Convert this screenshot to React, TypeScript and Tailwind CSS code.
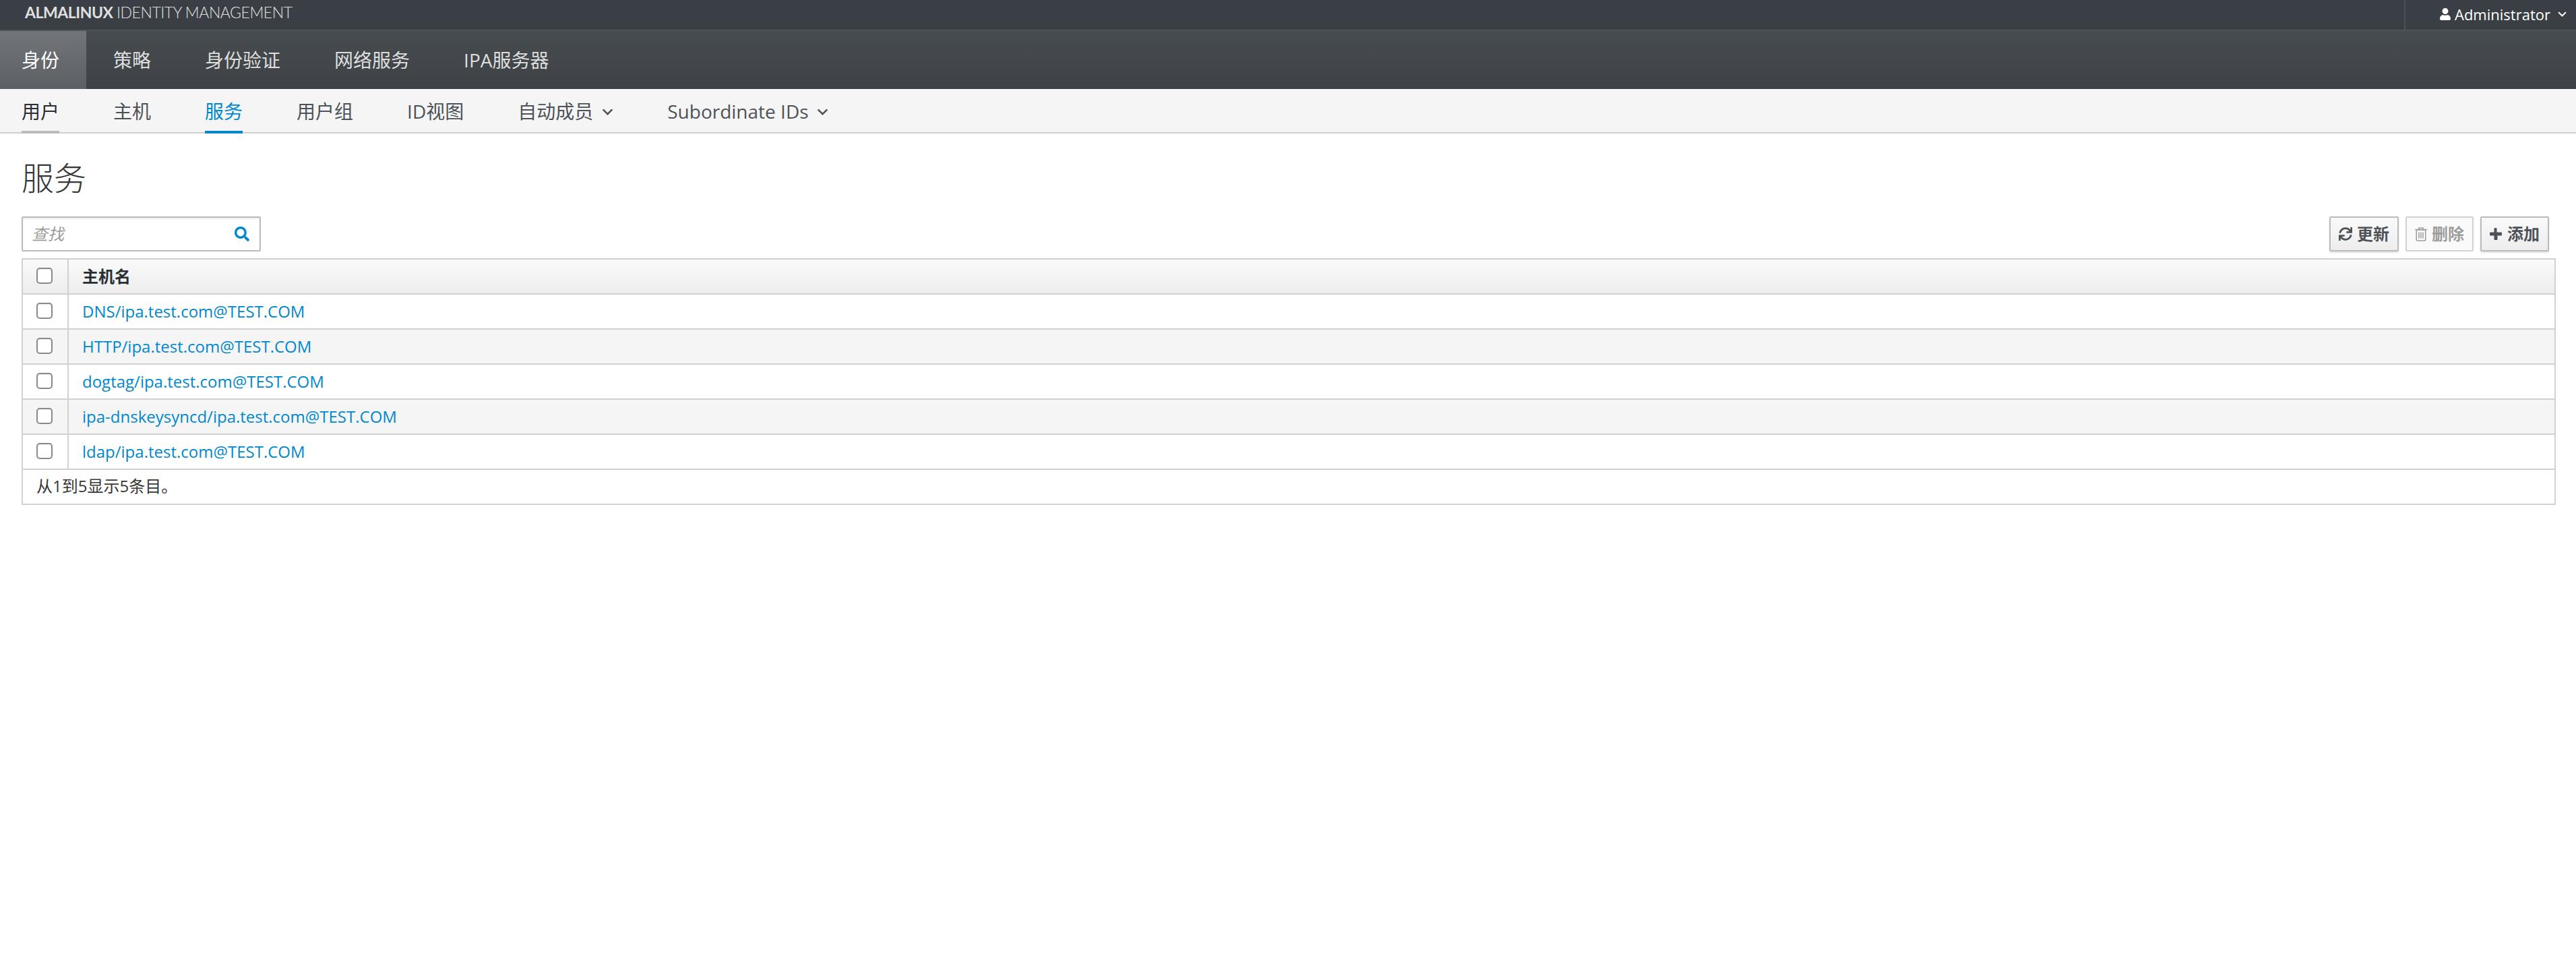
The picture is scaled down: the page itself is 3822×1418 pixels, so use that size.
import React from "react";
import { FaUser, FaSearch, FaSync } from "react-icons/fa";

function Chevron({ className }: { className?: string }) {
  return (
    <svg viewBox="0 0 18 11" className={className} fill="none" stroke="currentColor" strokeWidth="2.8">
      <path d="M1.5 1.5 L9 9 L16.5 1.5" />
    </svg>
  );
}

function TrashIcon() {
  return (
    <svg viewBox="0 0 18 21" className="w-[18px] h-[21px]" fill="none" stroke="currentColor" strokeWidth="1.5">
      <path d="M0 3.5 H18" />
      <path d="M6 3 V1 H12 V3" />
      <rect x="2.2" y="4" width="13.6" height="16" rx="1.5" />
      <path d="M6 7.5 V16.5 M9 7.5 V16.5 M12 7.5 V16.5" />
    </svg>
  );
}

function PlusIcon() {
  return (
    <svg viewBox="0 0 18 18" className="w-[18px] h-[18px]" fill="currentColor">
      <path d="M7.5 1 Q7.5 0 8.5 0 H9.5 Q10.5 0 10.5 1 V6.5 H17 Q18 6.5 18 7.5 V10.5 Q18 11.5 17 11.5 H11.5 V17 Q11.5 18 10.5 18 H7.5 Q6.5 18 6.5 17 V11.5 H1 Q0 11.5 0 10.5 V7.5 Q0 6.5 1 6.5 H6.5 V1 Q6.5 0 7.5 0 Z" />
    </svg>
  );
}

const rows = [
  "DNS/ipa.test.com@TEST.COM",
  "HTTP/ipa.test.com@TEST.COM",
  "dogtag/ipa.test.com@TEST.COM",
  "ipa-dnskeysyncd/ipa.test.com@TEST.COM",
  "ldap/ipa.test.com@TEST.COM",
];

const Check = () => (
  <input
    type="checkbox"
    className="appearance-none block w-6 h-6 rounded-[5px] border-2 border-[#8a8a8a] bg-white shadow-[inset_0_1px_2px_rgba(0,0,0,0.08)]"
  />
);

export default function App() {
  return (
    <div className="min-h-[1418px] bg-white font-['Open_Sans','Noto_Sans_CJK_SC',sans-serif] text-[24px] text-[#363636]">
      <div className="h-[46px] bg-[#393f44] border-b-2 border-[#4d5258] flex items-stretch justify-between">
        <div className="pl-[37px] pt-[2px] font-['Lato',sans-serif] text-[23px] leading-[32px] text-[#e0e0e0] tracking-[-0.45px]">
          <span className="font-bold">ALMALINUX</span> <span className="font-light">IDENTITY MANAGEMENT</span>
        </div>
        <div className="w-[255px] border-l-2 border-[#4d5258] flex items-center pl-[51px] text-white text-[22px] -mb-[2px] pb-[4px]">
          <FaUser className="w-[16px] h-[18px] mr-[6px]" />
          <span>Administrator</span>
          <Chevron className="w-[13px] h-[8px] ml-[11px]" />
        </div>
      </div>

      <div className="h-[86px] bg-gradient-to-b from-[#474c50] to-[#3e4246] flex items-stretch text-[28px] text-[#dedede]">
        <div className="pl-8 pr-10 flex items-center bg-gradient-to-b from-[#72767a] to-[#5c6064] text-white">身份</div>
        <div className="px-10 flex items-center">策略</div>
        <div className="px-10 flex items-center">身份验证</div>
        <div className="px-10 flex items-center">网络服务</div>
        <div className="px-10 flex items-center">IPA服务器</div>
      </div>

      <div className="h-[66px] bg-[#f5f5f5] border-b-2 border-[#cfcfcf] pl-8 flex items-stretch gap-20 text-[28px] text-[#4d5258]">
        <div className="h-[66px] pt-1 border-b-4 border-[#bbbbbb] flex items-center text-[#292e34]">用户</div>
        <div className="h-[66px] pt-1 border-b-4 border-transparent flex items-center">主机</div>
        <div className="h-[66px] pt-1 border-b-4 border-[#0088ce] flex items-center text-[#0088ce]">服务</div>
        <div className="h-[66px] pt-1 border-b-4 border-transparent flex items-center">用户组</div>
        <div className="h-[66px] pt-1 border-b-4 border-transparent flex items-center">ID视图</div>
        <div className="h-[66px] pt-1 border-b-4 border-transparent flex items-center">
          自动成员<Chevron className="w-[17px] h-[10px] ml-[13px] mt-[2px]" />
        </div>
        <div className="h-[66px] pt-1 border-b-4 border-transparent flex items-center">
          Subordinate IDs<Chevron className="w-[17px] h-[10px] ml-[12px] mt-[2px]" />
        </div>
      </div>

      <div className="pl-8 pr-[30px]">
        <h1 className="mt-[40px] mb-[31px] text-[48px] leading-[52px] font-light text-[#363636]">服务</h1>

        <div className="h-[52px] mb-[10px] flex items-center justify-between">
          <div className="w-[355px] h-[52px] border-2 border-[#bbbbbb] rounded-[2px] flex items-center shadow-[inset_0_2px_2px_rgba(3,3,3,0.08)]">
            <input
              placeholder="查找"
              className="flex-1 min-w-0 pl-[13px] bg-transparent outline-none italic text-[24px] placeholder:text-[#9c9c9c]"
            />
            <FaSearch className="w-[22px] h-[22px] mr-[15px] text-[#0088ce]" />
          </div>

          <div className="flex items-center gap-[10px] pr-[10px] font-semibold text-[#4d5258]">
            <button className="h-[52px] px-[12px] flex items-center gap-[7px] border-2 border-[#bbbbbb] rounded-[2px] bg-gradient-to-b from-[#fafafa] to-[#ededed] shadow-[0_2px_3px_rgba(3,3,3,0.12)]">
              <FaSync className="w-[20px] h-[20px]" />
              更新
            </button>
            <button className="h-[52px] px-[12px] flex items-center gap-[7px] border-2 border-[#d1d1d1] rounded-[2px] bg-[#fafafa] text-[#9c9c9c]">
              <TrashIcon />
              删除
            </button>
            <button className="h-[52px] px-[12px] flex items-center gap-[8px] border-2 border-[#bbbbbb] rounded-[2px] bg-gradient-to-b from-[#fafafa] to-[#ededed] shadow-[0_2px_3px_rgba(3,3,3,0.12)]">
              <PlusIcon />
              添加
            </button>
          </div>
        </div>

        <div className="border-2 border-[#d1d1d1]">
          <div className="h-[52px] flex items-stretch border-b-2 border-[#d1d1d1] bg-gradient-to-b from-[#fafafa] to-[#ededed]">
            <div className="w-[68px] border-r-2 border-[#d1d1d1] flex items-center pl-5 pb-[3px]"><Check /></div>
            <div className="flex items-center pl-5 pb-[1px] font-bold text-[#292e34]">主机名</div>
          </div>
          {rows.map((r, i) => (
            <div key={r} className={"h-[52px] flex items-stretch border-b-2 border-[#d1d1d1] " + (i % 2 === 1 ? "bg-[#f5f5f5]" : "bg-white")}>
              <div className="w-[68px] border-r-2 border-[#d1d1d1] flex items-center pl-5 pb-[3px]"><Check /></div>
              <a className="flex items-center pl-5 pb-[1px] text-[#0088ce]">{r}</a>
            </div>
          ))}
          <div className="h-[50px] flex items-center pl-5 pb-[2px]">从1到5显示5条目。</div>
        </div>
      </div>
    </div>
  );
}
